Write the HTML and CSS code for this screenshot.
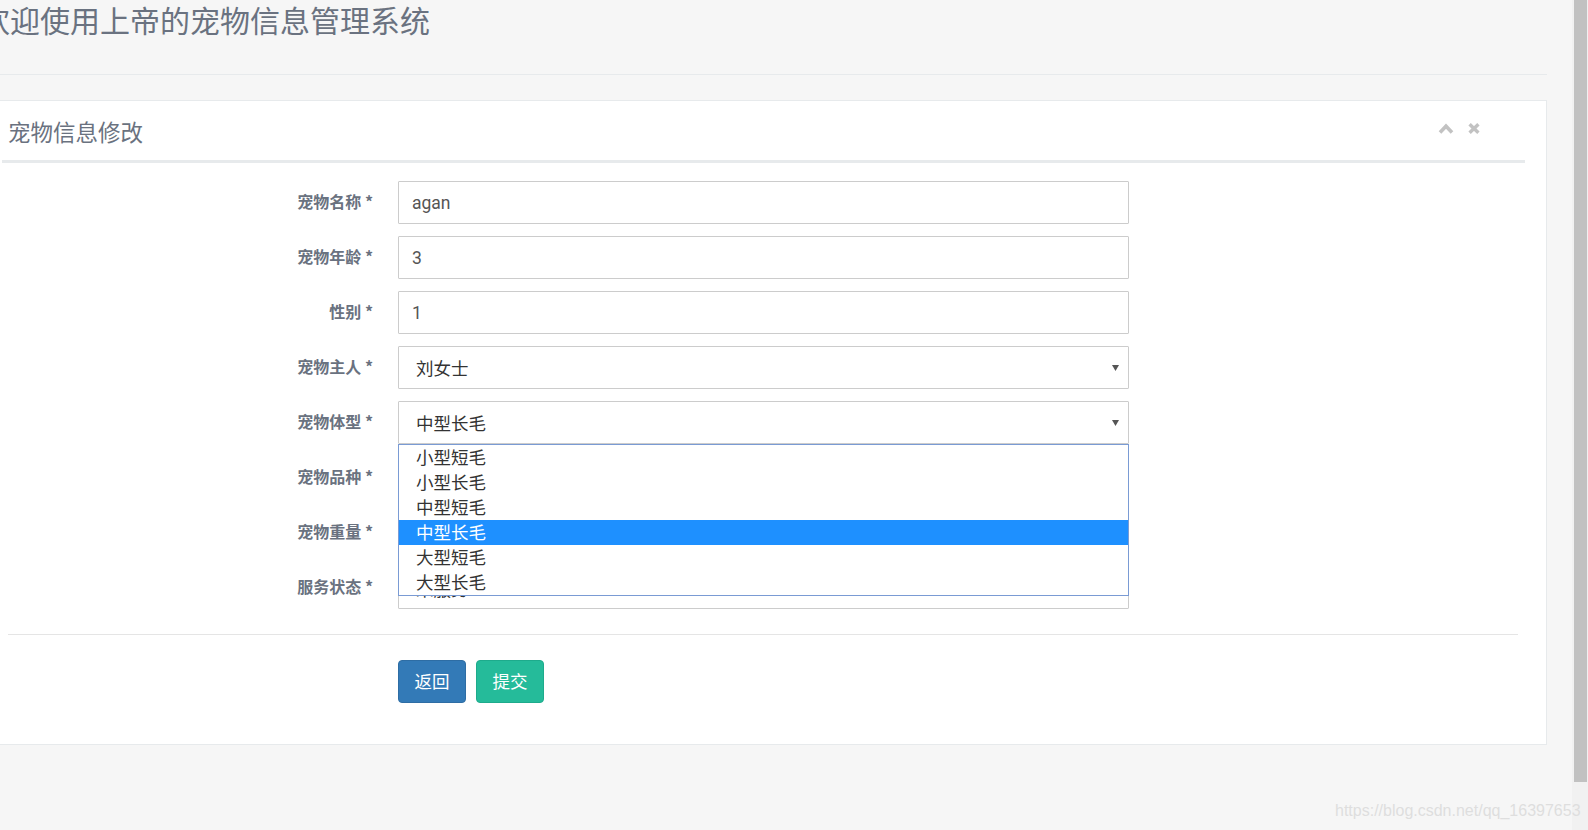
FILE: index.html
```html
<!DOCTYPE html>
<html lang="zh-CN">
<head>
<meta charset="utf-8">
<title>宠物信息修改</title>
<link rel="stylesheet" href="styles.css">
</head>
<body>
<div class="viewport">
  <main class="page">
    <div class="content">
      <div class="page-heading">
        <h1 class="page-title">欢迎使用上帝的宠物信息管理系统</h1>
      </div>
      <section class="ibox">
        <header class="ibox-title">
          <h5 class="ibox-heading">宠物信息修改</h5>
          <div class="ibox-tools">
            <svg class="tool-icon" width="16" height="11" viewBox="0 0 16 11"><polyline points="2,9.4 8,3.2 14,9.4" fill="none" stroke="#c2c2c2" stroke-width="3.6" stroke-linejoin="miter"/></svg>
            <svg class="tool-icon" width="12" height="11" viewBox="0 0 12 11"><path d="M1.6 1.2 L10.4 9.8 M10.4 1.2 L1.6 9.8" fill="none" stroke="#c2c2c2" stroke-width="3.4"/></svg>
          </div>
        </header>
        <form class="form">
          <label class="form-label">宠物名称 *</label>
          <input class="field" type="text" value="agan">

          <label class="form-label">宠物年龄 *</label>
          <input class="field" type="text" value="3">

          <label class="form-label">性别 *</label>
          <input class="field" type="text" value="1">

          <label class="form-label">宠物主人 *</label>
          <div class="select">
            <span class="select-text">刘女士</span>
            <svg class="caret" width="7" height="6" viewBox="0 0 7 6"><polygon points="0,0 7,0 3.5,6" fill="#555"/></svg>
          </div>

          <label class="form-label">宠物体型 *</label>
          <div class="select select-open">
            <span class="select-text">中型长毛</span>
            <svg class="caret" width="7" height="6" viewBox="0 0 7 6"><polygon points="0,0 7,0 3.5,6" fill="#555"/></svg>
            <ul class="listbox">
              <li class="option">小型短毛</li>
              <li class="option">小型长毛</li>
              <li class="option">中型短毛</li>
              <li class="option option-active">中型长毛</li>
              <li class="option">大型短毛</li>
              <li class="option">大型长毛</li>
            </ul>
          </div>

          <label class="form-label">宠物品种 *</label>
          <input class="field" type="text" value="金毛">

          <label class="form-label">宠物重量 *</label>
          <input class="field" type="text" value="20">

          <label class="form-label">服务状态 *</label>
          <div class="select">
            <span class="select-text select-text-low">未服务</span>
            <svg class="caret" width="7" height="6" viewBox="0 0 7 6"><polygon points="0,0 7,0 3.5,6" fill="#555"/></svg>
          </div>
        </form>
        <div class="divider"></div>
        <div class="actions">
          <button class="btn btn-back" type="button">返回</button>
          <button class="btn btn-submit" type="button">提交</button>
        </div>
      </section>
    </div>
  </main>
  <div class="scrollbar"><div class="thumb"></div></div>
</div>
<div class="watermark">https://blog.csdn.net/qq_16397653</div>
</body>
</html>
```

FILE: styles.css
```css
* {
  box-sizing: border-box;
}

html, body {
  margin: 0;
  padding: 0;
  height: 830px;
  overflow: hidden;
}

body {
  background: #f6f6f6;
  font-family: Roboto, "Noto Sans CJK SC", sans-serif;
  color: #676a6c;
}

.viewport {
  display: flex;
  height: 830px;
}

.page {
  flex: 1;
  overflow: hidden;
}

.content {
  margin-left: -20px;
  width: 1567px;
}

.page-heading {
  padding-bottom: 36px;
  border-bottom: 1px solid #e7eaec;
}

.page-title {
  margin: 0;
  font-family: "Noto Sans CJK SC", sans-serif;
  font-weight: 400;
  font-size: 30px;
  line-height: 38px;
  color: #6a7280;
  white-space: nowrap;
}

.ibox {
  margin-top: 25px;
  background: #fff;
  border: 1px solid #e7eaec;
}

.ibox-title {
  display: flex;
  justify-content: space-between;
  margin: 0 21px;
  padding: 15px 0 14px 6px;
  border-bottom: 3px solid #e7eaec;
}

.ibox-heading {
  margin: 0;
  font-family: "Noto Sans CJK SC", sans-serif;
  font-weight: 400;
  font-size: 22.5px;
  line-height: 30px;
  color: #6a7280;
}

.ibox-tools {
  display: flex;
  align-self: flex-start;
  gap: 14px;
  margin-top: 7px;
  margin-right: 45px;
}

.tool-icon {
  display: block;
}

.form {
  display: grid;
  grid-template-columns: 392px 731px;
  grid-auto-rows: 43px;
  column-gap: 25px;
  row-gap: 12px;
  margin-top: 18px;
}

.form-label {
  display: flex;
  align-items: center;
  justify-content: flex-end;
  padding-bottom: 4px;
  font-family: "Noto Sans CJK SC", sans-serif;
  font-weight: 700;
  font-size: 16px;
  color: #6a7280;
  white-space: pre;
}

.field {
  width: 731px;
  height: 43px;
  margin: 0;
  padding: 0 14px 0 13px;
  border: 1px solid #cccccc;
  border-radius: 1px;
  background: #fff;
  font-family: Roboto, "Noto Sans CJK SC", sans-serif;
  font-size: 17.5px;
  color: #555;
  outline: none;
}

.select {
  position: relative;
  display: flex;
  align-items: center;
  justify-content: space-between;
  height: 43px;
  padding: 0 9px 0 17px;
  border: 1px solid #cccccc;
  border-radius: 1px;
  background: #fff;
}

.select-text {
  font-family: "Noto Sans CJK SC", sans-serif;
  font-size: 17.5px;
  color: #333;
}

.select-text-low {
  padding-top: 2px;
}

.caret {
  display: block;
}

.listbox {
  position: absolute;
  top: 42px;
  left: -1px;
  right: -1px;
  z-index: 5;
  margin: 0;
  padding: 0;
  list-style: none;
  background: #fff;
  border: 1px solid #7a9bd4;
}

.option {
  height: 25px;
  padding-left: 17px;
  padding-bottom: 2px;
  font-family: "Noto Sans CJK SC", sans-serif;
  font-size: 17.5px;
  line-height: 23px;
  color: #333;
}

.option-active {
  background: #1e90ff;
  color: #fff;
}

.divider {
  margin: 25px 28px 0 27px;
  height: 1px;
  background: #e5e5e5;
}

.actions {
  display: flex;
  gap: 10px;
  margin-top: 25px;
  padding: 0 0 41px 417px;
}

.btn {
  height: 43px;
  width: 68px;
  padding: 0 0 2px;
  border-radius: 4px;
  font-family: "Noto Sans CJK SC", sans-serif;
  font-size: 17.5px;
  color: #fff;
  cursor: pointer;
}

.btn-back {
  background: #337ab7;
  border: 1px solid #2e6da4;
}

.btn-submit {
  background: #25bb9a;
  border: 1px solid #1eab8c;
}

.scrollbar {
  width: 16px;
  flex: none;
  background: #f1f1f1;
  padding-left: 2px;
}

.thumb {
  width: 13px;
  height: 782px;
  background: #c1c1c1;
}

.watermark {
  position: absolute;
  left: 1335px;
  top: 801px;
  font-family: "Liberation Sans", Arial, sans-serif;
  font-size: 16px;
  line-height: 20px;
  color: #dedede;
  white-space: nowrap;
}
```
